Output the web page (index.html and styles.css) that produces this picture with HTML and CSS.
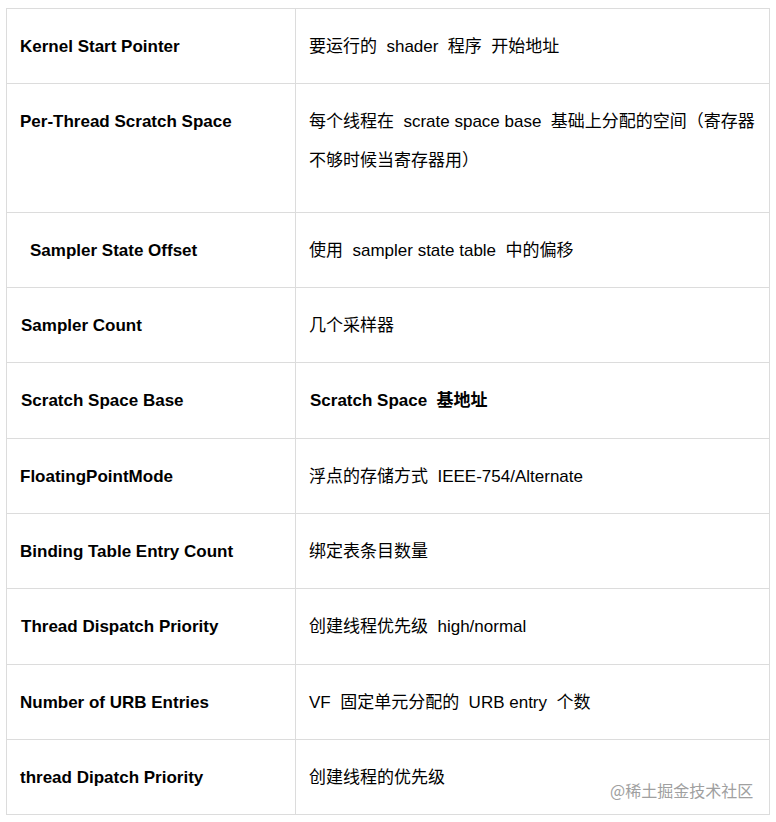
FILE: index.html
```html
<!DOCTYPE html>
<html lang="zh">
<head>
<meta charset="utf-8">
<link rel="stylesheet" href="styles.css">
</head>
<body>
<div class="wrap">
<table class="spec">
  <colgroup><col class="c1"><col class="c2"></colgroup>
  <tr class="r"><th>Kernel Start Pointer</th><td>要运行的&nbsp; shader&nbsp; 程序&nbsp; 开始地址</td></tr>
  <tr class="r tall"><th>Per-Thread Scratch Space</th><td>每个线程在&nbsp; scrate space base&nbsp; 基础上分配的空间（寄存器不够时候当寄存器用）</td></tr>
  <tr class="r"><th class="ind">Sampler State Offset</th><td>使用&nbsp; sampler state table&nbsp; 中的偏移</td></tr>
  <tr class="r"><th class="nudge">Sampler Count</th><td>几个采样器</td></tr>
  <tr class="r h76"><th class="nudge">Scratch Space Base</th><td class="b">Scratch Space&nbsp; 基地址</td></tr>
  <tr class="r"><th>FloatingPointMode</th><td>浮点的存储方式&nbsp; IEEE-754/Alternate</td></tr>
  <tr class="r"><th>Binding Table Entry Count</th><td>绑定表条目数量</td></tr>
  <tr class="r h76"><th class="nudge">Thread Dispatch Priority</th><td>创建线程优先级&nbsp; high/normal</td></tr>
  <tr class="r"><th>Number of URB Entries</th><td>VF&nbsp; 固定单元分配的&nbsp; URB entry&nbsp; 个数</td></tr>
  <tr class="r h74"><th>thread Dipatch Priority</th><td>创建线程的优先级</td></tr>
</table>
<div class="mark">@稀土掘金技术社区</div>
</div>
</body>
</html>
```
FILE: styles.css
```css
html, body {
  margin: 0;
  padding: 0;
  background: #fff;
}
body {
  font-family: "Liberation Sans", Arial, "Noto Sans CJK SC", sans-serif;
  color: #000;
}
.wrap {
  position: relative;
  width: 776px;
  height: 822px;
  padding: 8px 0 0 6px;
  box-sizing: border-box;
}
.spec {
  border-collapse: collapse;
  width: 763px;
  table-layout: fixed;
}
.c1 { width: 289px; }
.c2 { width: 474px; }
.spec th, .spec td {
  border: 1px solid #dcdcdc;
  text-align: left;
  vertical-align: top;
  font-size: 17px;
  line-height: 39px;
  padding: 18px 10px 17px 13px;
  box-sizing: border-box;
}
.spec th {
  font-weight: bold;
}
.spec td {
  font-weight: normal;
  padding-left: 13px;
}
.spec td.b { font-weight: bold; padding-left: 14px; }
.spec tr.r { height: 75px; }
.spec tr.h76 { height: 76px; }
.spec tr.h74 { height: 74px; }
.spec tr.tall { height: 129px; }
.spec th.ind { padding-left: 23px; }
.spec th.nudge { padding-left: 14px; }
.mark {
  position: absolute;
  left: 610px;
  top: 779px;
  font-size: 16px;
  color: #a0a0a0;
  font-family: "Noto Sans CJK SC", sans-serif;
  line-height: 22px;
}
```
